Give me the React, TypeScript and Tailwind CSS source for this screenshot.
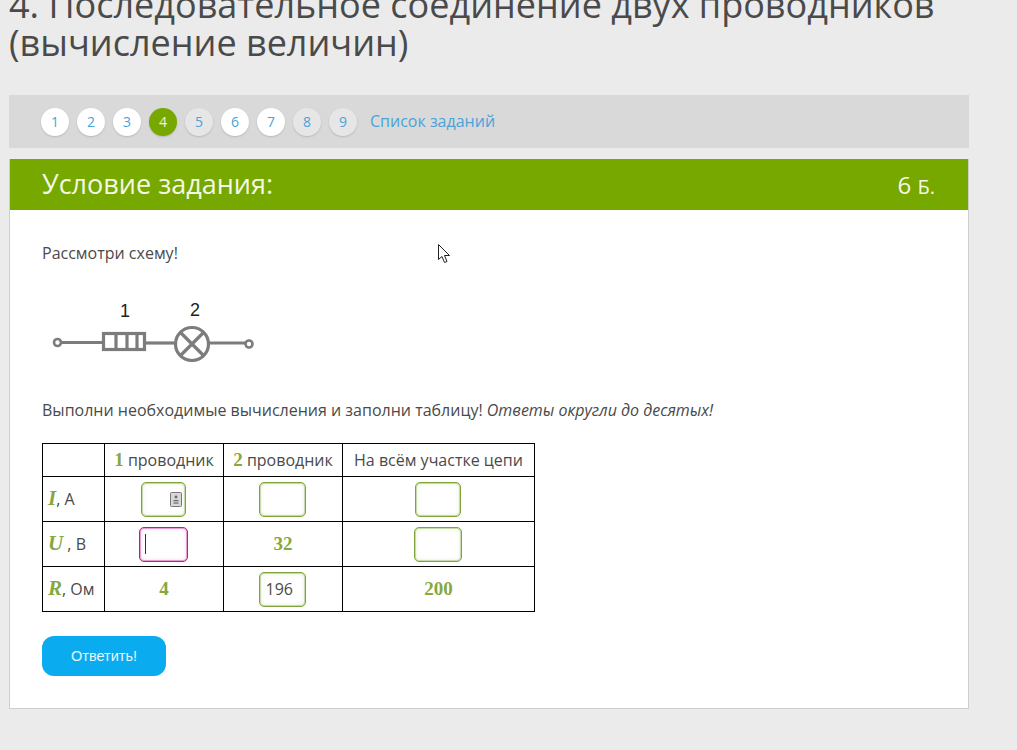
const font = { fontFamily: '"Open Sans", sans-serif' };

const pages = [
  { n: 1, kind: "white" },
  { n: 2, kind: "white" },
  { n: 3, kind: "white" },
  { n: 4, kind: "active" },
  { n: 5, kind: "grey" },
  { n: 6, kind: "white" },
  { n: 7, kind: "white" },
  { n: 8, kind: "grey" },
  { n: 9, kind: "grey" },
];

function PageDot({ n, kind }: { n: number; kind: string }) {
  const cls =
    kind === "active"
      ? "bg-[#76a800] text-[#eef5d8]"
      : kind === "grey"
        ? "bg-[#e6e6e6] text-[#4aa3d8]"
        : "bg-white text-[#4aa3d8]";
  return (
    <a className={`flex h-7 w-7 items-center justify-center rounded-full text-[14px] shadow-[0_1px_2px_rgba(0,0,0,0.15)] ${cls}`}>
      {n}
    </a>
  );
}

function Answer({ w = "w-[47px]", pink, value, keyIcon }: { w?: string; pink?: boolean; value?: string; keyIcon?: boolean }) {
  const tone = pink
    ? "border-[#c2188f] shadow-[inset_0_0_0_1px_rgba(194,24,143,0.35),inset_0_0_4px_rgba(194,24,143,0.25)]"
    : "border-[#7fa53a] shadow-[inset_0_0_0_1px_rgba(127,165,58,0.35),inset_0_0_4px_rgba(127,165,58,0.3)]";
  return (
    <div className={`relative mx-auto flex h-[35px] items-center rounded-[5px] border bg-white px-[6px] text-[16px] text-[#4a4a4a] ${w} ${tone}`}>
      {value}
      {pink && <span className="ml-[-1px] h-[20px] w-px bg-[#333]" />}
      {keyIcon && (
        <svg className="absolute right-[3px] top-[9px]" width="12" height="15" viewBox="0 0 12 15">
          <rect x="0.5" y="0.5" width="11" height="14" rx="1" fill="#d8d8d8" stroke="#777" />
          <circle cx="6" cy="5" r="1.4" fill="#666" />
          <rect x="3.5" y="8" width="5" height="1.2" fill="#666" />
          <rect x="3.5" y="10.4" width="5" height="1.2" fill="#666" />
        </svg>
      )}
    </div>
  );
}

function MathVar({ children }: { children: string }) {
  return <span className="font-['Liberation_Serif',serif] text-[21px] font-bold italic text-[#85a83f]">{children}</span>;
}

function MathNum({ children }: { children: string }) {
  return <span className="font-['Liberation_Serif',serif] text-[19px] font-bold text-[#85a83f]">{children}</span>;
}

function Scheme() {
  return (
    <svg width="240" height="80" viewBox="0 0 240 80" className="block">
      <g fill="none" stroke="#7c7c7c" strokeWidth="3.2">
        <circle cx="15.5" cy="52.5" r="3.5" strokeWidth="2.6" />
        <path d="M19 52.5H60" />
        <rect x="61.5" y="43.5" width="41" height="16" />
        <path d="M74 43v17M85 43v17M95 43v17" />
        <path d="M103 53H132" />
        <circle cx="150" cy="54" r="16.5" />
        <path d="M138.5 42.5l23 23M161.5 42.5l-23 23" />
        <path d="M167 53H203" />
        <circle cx="207" cy="54" r="3.5" strokeWidth="2.6" />
      </g>
      <text x="83" y="27" textAnchor="middle" fontSize="18" fill="#222" fontFamily="Liberation Sans, sans-serif">1</text>
      <text x="153" y="26" textAnchor="middle" fontSize="18" fill="#222" fontFamily="Liberation Sans, sans-serif">2</text>
    </svg>
  );
}

export default function App() {
  return (
    <div style={font} className="h-[750px] w-[1017px] overflow-hidden bg-[#ebebeb] text-[#4a4a4a]">
      <h1 className="mt-[-14px] ml-[9px] w-[960px] text-[36px] font-normal leading-[38px] text-[#4a4a4a]">
        4. Последовательное соединение двух проводников (вычисление величин)
      </h1>

      <nav className="mt-[33px] ml-[9px] flex h-[53px] w-[960px] items-center gap-2 bg-[#d9d9d9] pl-[32px]">
        {pages.map((p) => (
          <PageDot key={p.n} n={p.n} kind={p.kind} />
        ))}
        <a className="ml-[5px] mb-[2px] text-[16px] text-[#4aa3d8]">Список заданий</a>
      </nav>

      <section className="mt-[11px] ml-[9px] w-[960px] border border-t-0 border-[#cfcfcf] bg-white">
        <header className="flex h-[51px] items-center justify-between bg-[#76a800] pl-[32px] pr-[33px] text-[#f4f8e4]">
          <h2 className="text-[27px] font-normal">Условие задания:</h2>
          <span className="text-[24px]">
            6 <span className="text-[20px]">Б.</span>
          </span>
        </header>

        <div className="px-[32px] pt-[32px] pb-[32px] text-[16px]">
          <p className="leading-[22px]">Рассмотри схему!</p>
          <div className="mt-[26px] h-[80px]">
            <Scheme />
          </div>
          <p className="mt-[29px] leading-[22px]">
            Выполни необходимые вычисления и заполни таблицу! <em>Ответы округли до десятых!</em>
          </p>

          <table className="mt-[22px] w-[493px] table-fixed border-collapse border border-black">
            <colgroup>
              <col className="w-[62px]" />
              <col className="w-[119px]" />
              <col className="w-[119px]" />
              <col />
            </colgroup>
            <tbody>
              <tr className="h-[33px]">
                <td className="border border-black" />
                <td className="border border-black text-center">
                  <MathNum>1</MathNum> проводник
                </td>
                <td className="border border-black text-center">
                  <MathNum>2</MathNum> проводник
                </td>
                <td className="border border-black text-center">На всём участке цепи</td>
              </tr>
              <tr className="h-[45px]">
                <td className="border border-black pl-[5px]">
                  <MathVar>I</MathVar>, А
                </td>
                <td className="border border-black pr-[2px]"><Answer w="w-[45px]" keyIcon /></td>
                <td className="border border-black pr-[2px]"><Answer /></td>
                <td className="border border-black pr-[2px]"><Answer w="w-[46px]" /></td>
              </tr>
              <tr className="h-[45px]">
                <td className="border border-black pl-[5px]">
                  <MathVar>U</MathVar> , В
                </td>
                <td className="border border-black pr-[2px]"><Answer w="w-[49px]" pink /></td>
                <td className="border border-black text-center"><MathNum>32</MathNum></td>
                <td className="border border-black pr-[2px]"><Answer w="w-[48px]" /></td>
              </tr>
              <tr className="h-[45px]">
                <td className="border border-black pl-[5px]">
                  <MathVar>R</MathVar>, Ом
                </td>
                <td className="border border-black text-center"><MathNum>4</MathNum></td>
                <td className="border border-black pr-[2px]"><Answer value="196" /></td>
                <td className="border border-black text-center"><MathNum>200</MathNum></td>
              </tr>
            </tbody>
          </table>

          <button className="mt-[24px] block h-[40px] w-[124px] rounded-[12px] bg-[#0babf0] pt-[2px] font-['Liberation_Sans',sans-serif] text-[14.5px] text-[#e6f8ff]">
            Ответить!
          </button>
        </div>
      </section>

      <svg className="absolute left-[438px] top-[244px]" width="13" height="20" viewBox="0 0 13 20">
        <path d="M0.5 0.5V15.5L4 12.5L6.5 18.5L9 17.5L6.5 11.5H11.5Z" fill="#fff" stroke="#222" strokeWidth="1" />
      </svg>
    </div>
  );
}
